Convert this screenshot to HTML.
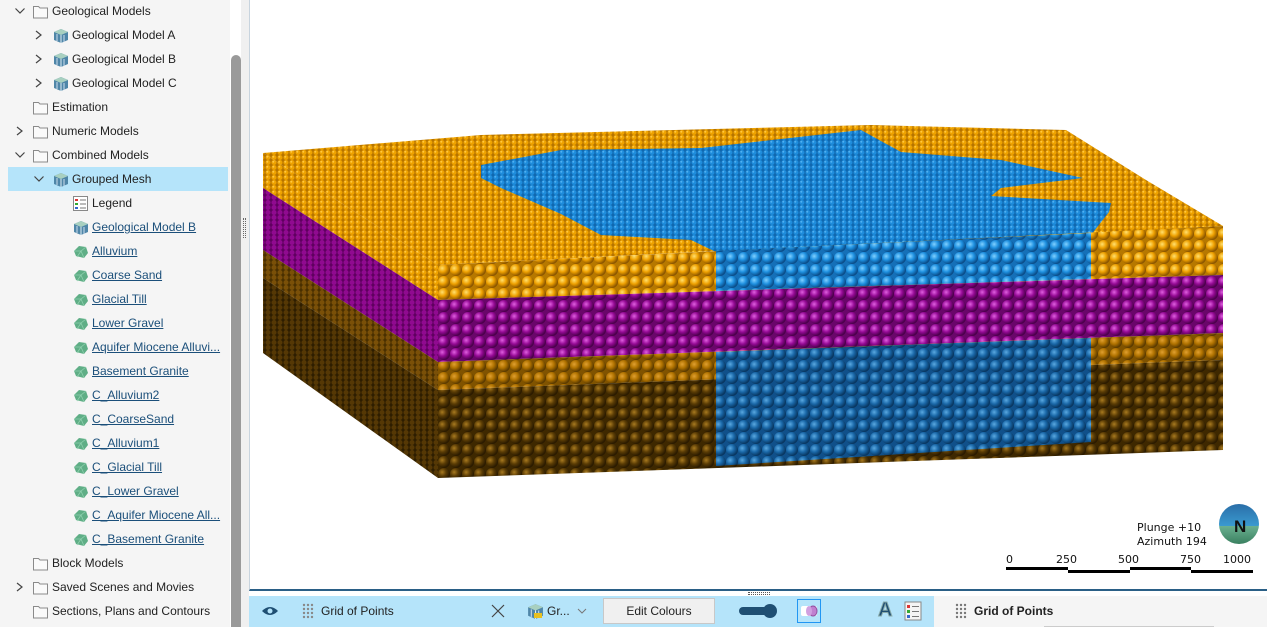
<!DOCTYPE html>
<html><head><meta charset="utf-8"><style>
*{margin:0;padding:0;box-sizing:border-box}
body{width:1267px;height:627px;overflow:hidden;background:#fff;font-family:"Liberation Sans","DejaVu Sans",sans-serif;font-size:12px;color:#222;position:relative}
#left{position:absolute;left:0;top:0;width:230px;height:627px;background:#f5f5f5}
.row{position:absolute;height:24px;line-height:22px;white-space:nowrap;font-size:12px}
.row a{color:#1b4f7a;text-decoration:underline}
.chev{position:absolute;top:0;width:12px;height:22px}
.ic{position:absolute;top:3px;width:17px;height:17px}
#sb{position:absolute;left:231px;top:55px;width:10px;height:572px;background:#9a9a9a;border-radius:5px 5px 0 0}
#split{position:absolute;left:241px;top:0;width:8px;height:627px;background:#f0f0f0}
#view{position:absolute;left:249px;top:0;width:1018px;height:591px;background:#fff;border-left:1px solid #c8d4de;border-bottom:2px solid #2a5f86}
#bar{position:absolute;left:249px;top:596px;width:685px;height:31px;background:#b5e4fa}
#rp{position:absolute;left:934px;top:596px;width:333px;height:31px;background:#f5f5f5}
</style></head><body>
<div id="left">
<svg width="0" height="0" style="position:absolute">
<defs>
<symbol id="fold" viewBox="0 0 17 17"><path d="M1.5 3.5h5l1.5 1.5h7.5v10h-14z" fill="#fafafa" stroke="#8a8a8a"/></symbol>
<symbol id="cv" viewBox="0 0 12 22"><path d="M3 7l5 4-5 4" fill="none" stroke="#444" stroke-width="1.2"/></symbol>
<symbol id="cd" viewBox="0 0 12 22"><path d="M1.5 8.5l4.5 4.5 4.5-4.5" fill="none" stroke="#444" stroke-width="1.2"/></symbol>
<symbol id="geo" viewBox="0 0 17 17"><path d="M2 5l7-3 7 3v8l-7 3-7-3z" fill="#4f86a8"/><path d="M2 5l7-3 7 3-7 3z" fill="#a8d0c0"/><path d="M9 8v8" stroke="#dfeef5"/><path d="M5 7v7M12 8v7" stroke="#cde" stroke-width="1"/></symbol>
<symbol id="msh" viewBox="0 0 17 17"><path d="M2 8l5-5 7 1 2 6-4 5-8-2z" fill="#5fae86"/><path d="M2 8l7 0 5-4M9 8l3 7M9 8l-4 6" stroke="#8fd0ae" fill="none" stroke-width=".8"/></symbol>
</defs></svg>
<div style="position:absolute;left:8px;top:167px;width:220px;height:24px;background:#b5e4fa"></div>
<div class="row" style="top:0;left:0"><svg class="chev" style="left:14px"><use href="#cd"/></svg><svg class="ic" style="left:32px"><use href="#fold"/></svg><span style="position:absolute;left:52px">Geological Models</span></div>
<div class="row" style="top:24px;left:0"><svg class="chev" style="left:33px"><use href="#cv"/></svg><svg class="ic" style="left:52px"><use href="#geo"/></svg><span style="position:absolute;left:72px">Geological Model A</span></div>
<div class="row" style="top:48px;left:0"><svg class="chev" style="left:33px"><use href="#cv"/></svg><svg class="ic" style="left:52px"><use href="#geo"/></svg><span style="position:absolute;left:72px">Geological Model B</span></div>
<div class="row" style="top:72px;left:0"><svg class="chev" style="left:33px"><use href="#cv"/></svg><svg class="ic" style="left:52px"><use href="#geo"/></svg><span style="position:absolute;left:72px">Geological Model C</span></div>
<div class="row" style="top:96px;left:0"><svg class="ic" style="left:32px"><use href="#fold"/></svg><span style="position:absolute;left:52px">Estimation</span></div>
<div class="row" style="top:120px;left:0"><svg class="chev" style="left:14px"><use href="#cv"/></svg><svg class="ic" style="left:32px"><use href="#fold"/></svg><span style="position:absolute;left:52px">Numeric Models</span></div>
<div class="row" style="top:144px;left:0"><svg class="chev" style="left:14px"><use href="#cd"/></svg><svg class="ic" style="left:32px"><use href="#fold"/></svg><span style="position:absolute;left:52px">Combined Models</span></div>
<div class="row" style="top:168px;left:0"><svg class="chev" style="left:33px"><use href="#cd"/></svg><svg class="ic" style="left:52px"><use href="#geo"/></svg><span style="position:absolute;left:72px">Grouped Mesh</span></div>
<div class="row" style="top:192px;left:0"><svg class="ic" style="left:72px" viewBox="0 0 17 17"><rect x="1.5" y="1.5" width="14" height="14" fill="#fff" stroke="#888"/><rect x="3" y="4" width="3" height="2" fill="#d33"/><rect x="3" y="8" width="3" height="2" fill="#3a3"/><rect x="3" y="12" width="3" height="2" fill="#36c"/><path d="M8 5h6M8 9h6M8 13h6" stroke="#777"/></svg><span style="position:absolute;left:92px">Legend</span></div>
<div class="row" style="top:216px;left:0"><svg class="ic" style="left:72px"><use href="#geo"/></svg><a style="position:absolute;left:92px">Geological Model B</a></div>
<div class="row" style="top:240px"><svg class="ic" style="left:72px"><use href="#msh"/></svg><a style="position:absolute;left:92px">Alluvium</a></div>
<div class="row" style="top:264px"><svg class="ic" style="left:72px"><use href="#msh"/></svg><a style="position:absolute;left:92px">Coarse Sand</a></div>
<div class="row" style="top:288px"><svg class="ic" style="left:72px"><use href="#msh"/></svg><a style="position:absolute;left:92px">Glacial Till</a></div>
<div class="row" style="top:312px"><svg class="ic" style="left:72px"><use href="#msh"/></svg><a style="position:absolute;left:92px">Lower Gravel</a></div>
<div class="row" style="top:336px"><svg class="ic" style="left:72px"><use href="#msh"/></svg><a style="position:absolute;left:92px">Aquifer Miocene Alluvi...</a></div>
<div class="row" style="top:360px"><svg class="ic" style="left:72px"><use href="#msh"/></svg><a style="position:absolute;left:92px">Basement Granite</a></div>
<div class="row" style="top:384px"><svg class="ic" style="left:72px"><use href="#msh"/></svg><a style="position:absolute;left:92px">C_Alluvium2</a></div>
<div class="row" style="top:408px"><svg class="ic" style="left:72px"><use href="#msh"/></svg><a style="position:absolute;left:92px">C_CoarseSand</a></div>
<div class="row" style="top:432px"><svg class="ic" style="left:72px"><use href="#msh"/></svg><a style="position:absolute;left:92px">C_Alluvium1</a></div>
<div class="row" style="top:456px"><svg class="ic" style="left:72px"><use href="#msh"/></svg><a style="position:absolute;left:92px">C_Glacial Till</a></div>
<div class="row" style="top:480px"><svg class="ic" style="left:72px"><use href="#msh"/></svg><a style="position:absolute;left:92px">C_Lower Gravel</a></div>
<div class="row" style="top:504px"><svg class="ic" style="left:72px"><use href="#msh"/></svg><a style="position:absolute;left:92px">C_Aquifer Miocene All...</a></div>
<div class="row" style="top:528px"><svg class="ic" style="left:72px"><use href="#msh"/></svg><a style="position:absolute;left:92px">C_Basement Granite</a></div>
<div class="row" style="top:552px"><svg class="ic" style="left:32px"><use href="#fold"/></svg><span style="position:absolute;left:52px">Block Models</span></div>
<div class="row" style="top:576px"><svg class="chev" style="left:14px"><use href="#cv"/></svg><svg class="ic" style="left:32px"><use href="#fold"/></svg><span style="position:absolute;left:52px">Saved Scenes and Movies</span></div>
<div class="row" style="top:600px"><svg class="ic" style="left:32px"><use href="#fold"/></svg><span style="position:absolute;left:52px">Sections, Plans and Contours</span></div>
</div>
<div id="split"><div style="position:absolute;left:2px;top:218px;width:3px;height:20px;border-left:1px dotted #666;border-right:1px dotted #666"></div></div>
<div id="sb"></div>
<div id="view">
<svg width="1018" height="589" viewBox="249 0 1018 589" style="position:absolute;left:0;top:0">
<defs>
<radialGradient id="gO" cx=".35" cy=".35" r=".65"><stop offset="0" stop-color="#ffe070"/><stop offset=".5" stop-color="#eea000"/><stop offset="1" stop-color="#8a5500"/></radialGradient>
<radialGradient id="gM" cx=".35" cy=".35" r=".65"><stop offset="0" stop-color="#e060e0"/><stop offset=".5" stop-color="#950a95"/><stop offset="1" stop-color="#4a004a"/></radialGradient>
<radialGradient id="gB" cx=".35" cy=".35" r=".65"><stop offset="0" stop-color="#80d0ff"/><stop offset=".5" stop-color="#1e90e0"/><stop offset="1" stop-color="#0a4c88"/></radialGradient>
<radialGradient id="gD" cx=".35" cy=".35" r=".65"><stop offset="0" stop-color="#5aa8e0"/><stop offset=".5" stop-color="#1a68a8"/><stop offset="1" stop-color="#083660"/></radialGradient>
<radialGradient id="gW" cx=".35" cy=".35" r=".65"><stop offset="0" stop-color="#a87a20"/><stop offset=".5" stop-color="#5a3c05"/><stop offset="1" stop-color="#2a1a00"/></radialGradient>
<radialGradient id="gL" cx=".35" cy=".35" r=".65"><stop offset="0" stop-color="#e0a030"/><stop offset=".5" stop-color="#b07200"/><stop offset="1" stop-color="#5a3a00"/></radialGradient>
<pattern id="pO" width="12" height="12" patternUnits="userSpaceOnUse" x="437" y="0"><rect width="12" height="12" fill="#b67800"/><circle cx="6" cy="6" r="6" fill="url(#gO)"/></pattern>
<pattern id="pM" width="12" height="12" patternUnits="userSpaceOnUse" x="437" y="0"><rect width="12" height="12" fill="#6a066a"/><circle cx="6" cy="6" r="6" fill="url(#gM)"/></pattern>
<pattern id="pB" width="12" height="12" patternUnits="userSpaceOnUse" x="437" y="0"><rect width="12" height="12" fill="#1570b8"/><circle cx="6" cy="6" r="6" fill="url(#gB)"/></pattern>
<pattern id="pD" width="12" height="12" patternUnits="userSpaceOnUse" x="437" y="0"><rect width="12" height="12" fill="#10508a"/><circle cx="6" cy="6" r="6" fill="url(#gD)"/></pattern>
<pattern id="pW" width="12" height="12" patternUnits="userSpaceOnUse" x="437" y="0"><rect width="12" height="12" fill="#3e2800"/><circle cx="6" cy="6" r="6" fill="url(#gW)"/></pattern>
<pattern id="pL" width="12" height="12" patternUnits="userSpaceOnUse" x="437" y="0"><rect width="12" height="12" fill="#805300"/><circle cx="6" cy="6" r="6" fill="url(#gL)"/></pattern>
<pattern id="tO" width="6" height="5" patternUnits="userSpaceOnUse"><rect width="6" height="5" fill="#b67400"/><circle cx="3" cy="2.5" r="2.5" fill="#eea200"/><circle cx="2.3" cy="1.8" r="1" fill="#ffc840"/></pattern>
<pattern id="tB" width="6" height="5" patternUnits="userSpaceOnUse"><rect width="6" height="5" fill="#1068b0"/><circle cx="3" cy="2.5" r="2.5" fill="#1e8cdc"/><circle cx="2.3" cy="1.8" r="1" fill="#50b0f0"/></pattern>
<pattern id="tM" width="6" height="5" patternUnits="userSpaceOnUse"><rect width="6" height="5" fill="#600060"/><circle cx="3" cy="2.5" r="2.5" fill="#900a90"/></pattern>
<pattern id="tW" width="6" height="5" patternUnits="userSpaceOnUse"><rect width="6" height="5" fill="#2e1e00"/><circle cx="3" cy="2.5" r="2.5" fill="#553805"/></pattern>
<pattern id="tL" width="6" height="5" patternUnits="userSpaceOnUse"><rect width="6" height="5" fill="#4a3000"/><circle cx="3" cy="2.5" r="2.5" fill="#7a5008"/></pattern>
</defs>
<polygon points="262,153 480,135 870,125 1065,130 1145,180 1222,226 1090,233 715,251 437,265" fill="url(#tO)"/>
<polygon points="480,165 560,150 700,148 860,130 900,152 1000,160 1082,178 1000,188 990,196 1110,203 1108,212 1090,235 1000,244 715,252 690,240 600,235 560,214 500,188 480,178" fill="url(#tB)"/>
<polygon points="262,153 437,265 437,300 262,188" fill="url(#tO)"/>
<polygon points="262,188 437,300 437,362 262,250" fill="url(#tM)"/>
<polygon points="262,250 437,362 437,390 262,278" fill="url(#tL)"/>
<polygon points="262,278 437,390 437,478 262,353" fill="url(#tW)"/>
<polygon points="437,265 1222,226 1222,275 437,300" fill="url(#pO)"/>
<polygon points="437,300 1222,275 1222,333 437,362" fill="url(#pM)"/>
<polygon points="437,362 1222,333 1222,360 437,390" fill="url(#pL)"/>
<polygon points="437,390 1222,360 1222,450 437,478" fill="url(#pW)"/>
<polygon points="715,251 1090,233 1090,279 715,291" fill="url(#pB)"/>
<polygon points="715,352 1090,338 1090,442 715,466" fill="url(#pD)"/>
<text x="1136" y="531" font-family="DejaVu Sans" font-size="11" fill="#111">Plunge +10</text>
<text x="1136" y="545" font-family="DejaVu Sans" font-size="11" fill="#111">Azimuth 194</text>
<defs><linearGradient id="nb" x1="0" y1="0" x2="0" y2="1"><stop offset="0" stop-color="#2a6ea8"/><stop offset=".55" stop-color="#3a9ad0"/><stop offset=".55" stop-color="#6ab090"/><stop offset="1" stop-color="#3a8060"/></linearGradient></defs>
<circle cx="1238" cy="524" r="20" fill="url(#nb)"/>
<text x="1233" y="532" font-family="Liberation Sans" font-weight="bold" font-size="17" fill="#111">N</text>
<g font-family="DejaVu Sans" font-size="11" fill="#111"><text x="1005" y="563">0</text><text x="1055" y="563">250</text><text x="1117" y="563">500</text><text x="1179" y="563">750</text><text x="1222" y="563">1000</text></g>
<rect x="1005" y="567" width="62" height="3" fill="#000"/><rect x="1067" y="570" width="62" height="3" fill="#000"/><rect x="1129" y="567" width="61" height="3" fill="#000"/><rect x="1190" y="570" width="62" height="3" fill="#000"/>
</svg>
</div>
<div style="position:absolute;left:748px;top:592px;width:22px;height:3px;border-top:1px dotted #555;border-bottom:1px dotted #555"></div>
<div id="bar">
<svg style="position:absolute;left:12px;top:8px" width="18" height="14"><path d="M1 7Q9 -1 17 7Q9 15 1 7z" fill="#1f4f73"/><circle cx="9" cy="7" r="2.5" fill="#b5e4fa"/></svg>
<svg style="position:absolute;left:53px;top:7px" width="14" height="16"><g fill="#888"><circle cx="2" cy="2" r="1.2"/><circle cx="6" cy="2" r="1.2"/><circle cx="10" cy="2" r="1.2"/><circle cx="2" cy="6" r="1.2"/><circle cx="6" cy="6" r="1.2"/><circle cx="10" cy="6" r="1.2"/><circle cx="2" cy="10" r="1.2"/><circle cx="6" cy="10" r="1.2"/><circle cx="10" cy="10" r="1.2"/><circle cx="2" cy="14" r="1.2"/><circle cx="6" cy="14" r="1.2"/><circle cx="10" cy="14" r="1.2"/></g></svg>
<span style="position:absolute;left:72px;top:8px">Grid of Points</span>
<svg style="position:absolute;left:242px;top:8px" width="14" height="14"><path d="M1 1l12 12M13 1L1 13" stroke="#444" stroke-width="1.2"/></svg>
<svg style="position:absolute;left:277px;top:6px" width="18" height="18"><use href="#geo"/><rect x="8" y="11" width="8" height="5" fill="#e8c020"/></svg>
<span style="position:absolute;left:298px;top:8px">Gr...</span>
<svg style="position:absolute;left:328px;top:11px" width="10" height="8"><path d="M1 2l4 4 4-4" fill="none" stroke="#777"/></svg>
<div style="position:absolute;left:354px;top:2px;width:112px;height:26px;background:#f0f0f0;border:1px solid #c8c8c8;text-align:center;line-height:24px">Edit Colours</div>
<svg style="position:absolute;left:488px;top:6px" width="44" height="18"><rect x="2" y="5" width="30" height="8" rx="4" fill="#1f4f73"/><circle cx="33" cy="9" r="7" fill="#1f4f73"/></svg>
<div style="position:absolute;left:548px;top:3px;width:24px;height:24px;border:1px solid #2196f3"><svg width="22" height="22"><rect x="3" y="6" width="16" height="10" rx="2" fill="#fff"/><ellipse cx="15" cy="11" rx="4" ry="5" fill="#c080d0" stroke="#9050a0"/><ellipse cx="11" cy="11" rx="3" ry="5" fill="#d0a0e0"/></svg></div>
<span style="position:absolute;left:629px;top:3px;font-size:20px;font-weight:bold;color:#1f4f73;-webkit-text-stroke:1px #8aa">A</span>
<svg style="position:absolute;left:655px;top:5px" width="18" height="20"><rect x="1" y="1" width="16" height="18" fill="#f4f4f4" stroke="#888"/><rect x="3" y="4" width="3" height="3" fill="#d33"/><rect x="3" y="9" width="3" height="3" fill="#3a3"/><rect x="3" y="14" width="3" height="3" fill="#36c"/><path d="M8 5.5h7M8 10.5h7M8 15.5h7" stroke="#777"/></svg>
</div>
<div id="rp">
<svg style="position:absolute;left:21px;top:7px" width="14" height="16"><g fill="#777"><circle cx="2" cy="2" r="1.2"/><circle cx="6" cy="2" r="1.2"/><circle cx="10" cy="2" r="1.2"/><circle cx="2" cy="6" r="1.2"/><circle cx="6" cy="6" r="1.2"/><circle cx="10" cy="6" r="1.2"/><circle cx="2" cy="10" r="1.2"/><circle cx="6" cy="10" r="1.2"/><circle cx="10" cy="10" r="1.2"/><circle cx="2" cy="14" r="1.2"/><circle cx="6" cy="14" r="1.2"/><circle cx="10" cy="14" r="1.2"/></g></svg>
<span style="position:absolute;left:40px;top:8px;font-weight:bold">Grid of Points</span>
<div style="position:absolute;left:110px;top:30px;width:170px;height:1px;background:#ccc"></div>
</div>
</body></html>
